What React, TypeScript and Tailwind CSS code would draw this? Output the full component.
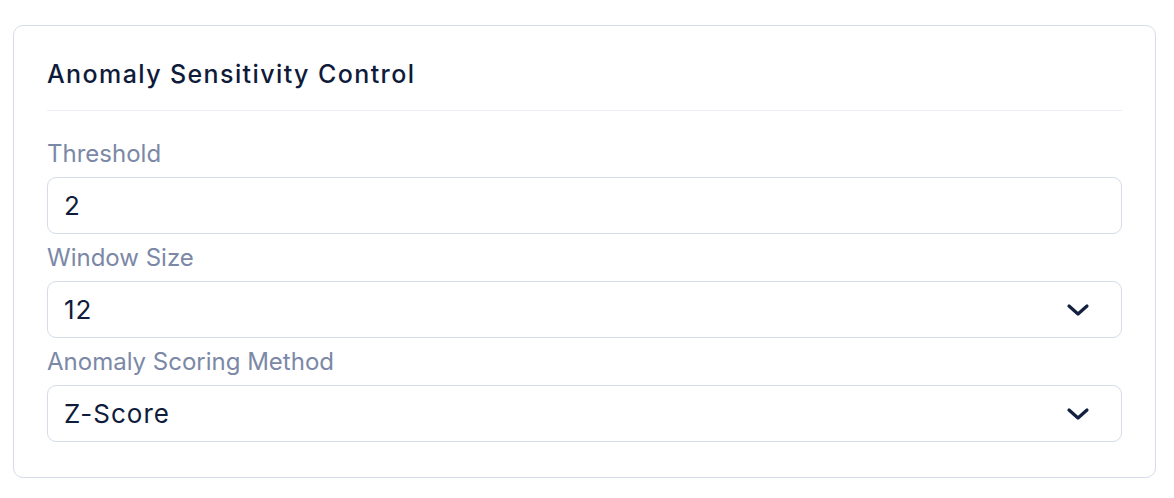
import React from "react";

const Chevron = () => (
  <svg width="24" height="14" viewBox="0 0 24 14" fill="none" className="shrink-0">
    <polyline
      points="3,3 12,11 21,3"
      stroke="#13203f"
      strokeWidth="3.2"
      strokeLinecap="round"
      strokeLinejoin="round"
    />
  </svg>
);

function Label({ children }: { children: React.ReactNode }) {
  return (
    <div className="h-[47px] flex items-center text-[24px] text-[#7b88a6]">{children}</div>
  );
}

function Field({ value, select }: { value: string; select?: boolean }) {
  return (
    <div className="h-[57px] flex items-center justify-between border border-[#d6dcea] rounded-[9px] pl-4 pr-[31px] text-[26px] tracking-[1px] text-[#0f1c3a]">
      <span>{value}</span>
      {select && <Chevron />}
    </div>
  );
}

export default function App() {
  return (
    <div
      className="min-h-screen bg-white pt-[25px] pl-[13px]"
      style={{ fontFamily: "Inter, 'Noto Sans', sans-serif" }}
    >
      <div className="w-[1143px] border border-[#d6dcea] rounded-[10px] pt-[32px] pb-[35px] px-[33px]">
        {/* header */}
        <h2 className="text-[25px] leading-[32px] font-medium tracking-[1.4px] text-[#0f1b3a]">
          Anomaly Sensitivity Control
        </h2>
        <div className="h-px bg-[#eceff4] mt-[20px] mb-[19px]" />

        <Label>Threshold</Label>
        <Field value="2" />
        <Label>Window Size</Label>
        <Field value="12" select />
        <Label>Anomaly Scoring Method</Label>
        <Field value="Z-Score" select />
      </div>
    </div>
  );
}
